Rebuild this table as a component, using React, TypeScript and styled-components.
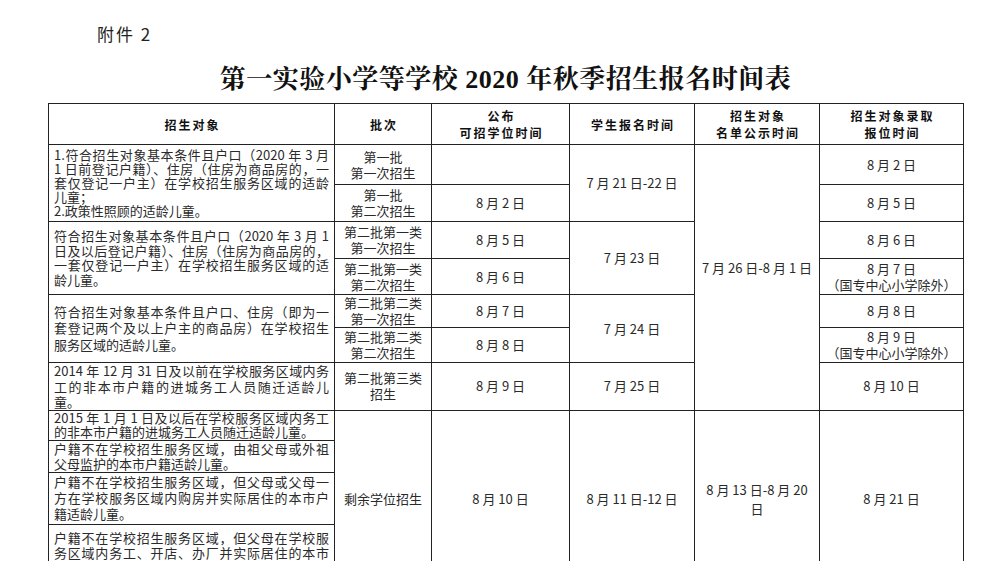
import React from "react";
import styled, { createGlobalStyle } from "styled-components";

const Global = createGlobalStyle`
  html, body {
    margin: 0;
    padding: 0;
    background: #ffffff;
    overflow: hidden;
  }
  body {
    font-family: "Noto Sans CJK SC", "Noto Sans", sans-serif;
    color: #222;
  }
`;

const Page = styled.div`
  width: 1000px;
  height: 561px;
  overflow: hidden;
  box-sizing: border-box;
  padding: 22px 0 0 48px;
`;

const Annex = styled.div`
  margin-left: 49px;
  font-size: 17px;
  line-height: 24px;
  letter-spacing: 2px;
  color: #222;
`;

const Title = styled.h1`
  width: 915px;
  margin: 17px 0 0;
  text-align: center;
  font-family: "Liberation Serif", "Noto Serif CJK SC", "Noto Sans CJK SC", serif;
  font-size: 26px;
  line-height: 34px;
  font-weight: 700;
  letter-spacing: 0.5px;
  color: #111;
`;

const Table = styled.table`
  margin-top: 6px;
  width: 915px;
  table-layout: fixed;
  border-collapse: collapse;
  font-size: 13px;
  color: #2a2a2a;
`;

const Row = styled.tr<{ $h: number }>`
  height: ${(p) => p.$h}px;
`;

const HeadCell = styled.th`
  border: 1px solid #222;
  padding: 0 0 0 2px;
  font-size: 12px;
  font-weight: 700;
  letter-spacing: 2px;
  line-height: 17px;
  text-align: center;
  vertical-align: middle;
  color: #111;
`;

const TargetCell = styled.td<{ $lh: number; $top?: boolean }>`
  border: 1px solid #222;
  padding: ${(p) => (p.$top ? "5px 5px 0" : "0 5px")};
  line-height: ${(p) => p.$lh}px;
  vertical-align: ${(p) => (p.$top ? "top" : "middle")};
`;

const Line = styled.span<{ $end?: boolean }>`
  display: block;
  white-space: nowrap;
  text-align: justify;
  text-align-last: ${(p) => (p.$end ? "left" : "justify")};
`;

const BatchCell = styled.td`
  border: 1px solid #222;
  padding: 0 2px;
  text-align: center;
  vertical-align: middle;
  line-height: 16px;
`;

const DateCell = styled.td<{ $lh?: number; $pb?: number }>`
  border: 1px solid #222;
  padding: 0 3px ${(p) => p.$pb ?? 0}px;
  text-align: center;
  vertical-align: middle;
  line-height: ${(p) => p.$lh ?? 16}px;
  white-space: nowrap;
`;

const isParagraphEnd = (text: string) => /[；。]$/.test(text);

const Para = ({ lines }: { lines: string[] }) => (
  <>
    {lines.map((l, i) => (
      <Line key={i} $end={i === lines.length - 1 || isParagraphEnd(l)}>
        {l}
      </Line>
    ))}
  </>
);

const colWidths = [286, 97, 138, 125, 125, 144];

export default function App() {
  return (
    <>
      <Global />
      <Page>
        <Annex>附件 2</Annex>
        <Title>第一实验小学等学校 2020 年秋季招生报名时间表</Title>
        <Table>
          <colgroup>
            {colWidths.map((w, i) => (
              <col key={i} style={{ width: w }} />
            ))}
          </colgroup>
          <tbody>
            <Row $h={41}>
              <HeadCell>招生对象</HeadCell>
              <HeadCell>批次</HeadCell>
              <HeadCell>
                公布
                <br />
                可招学位时间
              </HeadCell>
              <HeadCell>学生报名时间</HeadCell>
              <HeadCell>
                招生对象
                <br />
                名单公示时间
              </HeadCell>
              <HeadCell>
                招生对象录取
                <br />
                报位时间
              </HeadCell>
            </Row>

            <Row $h={40}>
              <TargetCell rowSpan={2} $lh={14}>
                <Para
                  lines={[
                    "1.符合招生对象基本条件且户口（2020 年 3 月",
                    "1 日前登记户籍）、住房（住房为商品房的，一",
                    "套仅登记一户主）在学校招生服务区域的适龄",
                    "儿童；",
                    "2.政策性照顾的适龄儿童。",
                  ]}
                />
              </TargetCell>
              <BatchCell>
                第一批
                <br />
                第一次招生
              </BatchCell>
              <DateCell />
              <DateCell rowSpan={2}>7 月 21 日-22 日</DateCell>
              <DateCell rowSpan={7} $pb={18}>
                7 月 26 日-8 月 1 日
              </DateCell>
              <DateCell>8 月 2 日</DateCell>
            </Row>
            <Row $h={37}>
              <BatchCell>
                第一批
                <br />
                第二次招生
              </BatchCell>
              <DateCell>8 月 2 日</DateCell>
              <DateCell>8 月 5 日</DateCell>
            </Row>

            <Row $h={37}>
              <TargetCell rowSpan={2} $lh={14.5}>
                <Para
                  lines={[
                    "符合招生对象基本条件且户口（2020 年 3 月 1",
                    "日及以后登记户籍）、住房（住房为商品房的，",
                    "一套仅登记一户主）在学校招生服务区域的适",
                    "龄儿童。",
                  ]}
                />
              </TargetCell>
              <BatchCell>
                第二批第一类
                <br />
                第一次招生
              </BatchCell>
              <DateCell>8 月 5 日</DateCell>
              <DateCell rowSpan={2}>7 月 23 日</DateCell>
              <DateCell>8 月 6 日</DateCell>
            </Row>
            <Row $h={36}>
              <BatchCell>
                第二批第一类
                <br />
                第二次招生
              </BatchCell>
              <DateCell>8 月 6 日</DateCell>
              <DateCell>
                8 月 7 日
                <br />
                （国专中心小学除外）
              </DateCell>
            </Row>

            <Row $h={33}>
              <TargetCell rowSpan={2} $lh={16.5}>
                <Para
                  lines={[
                    "符合招生对象基本条件且户口、住房（即为一",
                    "套登记两个及以上户主的商品房）在学校招生",
                    "服务区域的适龄儿童。",
                  ]}
                />
              </TargetCell>
              <BatchCell>
                第二批第二类
                <br />
                第一次招生
              </BatchCell>
              <DateCell>8 月 7 日</DateCell>
              <DateCell rowSpan={2}>7 月 24 日</DateCell>
              <DateCell>8 月 8 日</DateCell>
            </Row>
            <Row $h={35}>
              <BatchCell>
                第二批第二类
                <br />
                第二次招生
              </BatchCell>
              <DateCell>8 月 8 日</DateCell>
              <DateCell>
                8 月 9 日
                <br />
                （国专中心小学除外）
              </DateCell>
            </Row>

            <Row $h={47}>
              <TargetCell $lh={15.5}>
                <Para
                  lines={[
                    "2014 年 12 月 31 日及以前在学校服务区域内务",
                    "工的非本市户籍的进城务工人员随迁适龄儿",
                    "童。",
                  ]}
                />
              </TargetCell>
              <BatchCell>
                第二批第三类
                <br />
                招生
              </BatchCell>
              <DateCell>8 月 9 日</DateCell>
              <DateCell>7 月 25 日</DateCell>
              <DateCell>8 月 10 日</DateCell>
            </Row>

            <Row $h={30}>
              <TargetCell $lh={14.5}>
                <Para
                  lines={[
                    "2015 年 1 月 1 日及以后在学校服务区域内务工",
                    "的非本市户籍的进城务工人员随迁适龄儿童。",
                  ]}
                />
              </TargetCell>
              <BatchCell rowSpan={4}>剩余学位招生</BatchCell>
              <DateCell rowSpan={4}>8 月 10 日</DateCell>
              <DateCell rowSpan={4}>8 月 11 日-12 日</DateCell>
              <DateCell rowSpan={4} $lh={19}>
                8 月 13 日-8 月 20
                <br />日
              </DateCell>
              <DateCell rowSpan={4}>8 月 21 日</DateCell>
            </Row>
            <Row $h={31}>
              <TargetCell $lh={15.5}>
                <Para
                  lines={[
                    "户籍不在学校招生服务区域，由祖父母或外祖",
                    "父母监护的本市户籍适龄儿童。",
                  ]}
                />
              </TargetCell>
            </Row>
            <Row $h={52}>
              <TargetCell $lh={16}>
                <Para
                  lines={[
                    "户籍不在学校招生服务区域，但父母或父母一",
                    "方在学校服务区域内购房并实际居住的本市户",
                    "籍适龄儿童。",
                  ]}
                />
              </TargetCell>
            </Row>
            <Row $h={64}>
              <TargetCell $lh={15.5} $top>
                <Para
                  lines={[
                    "户籍不在学校招生服务区域，但父母在学校服",
                    "务区域内务工、开店、办厂并实际居住的本市",
                    "户籍适龄儿童。",
                  ]}
                />
              </TargetCell>
            </Row>
          </tbody>
        </Table>
      </Page>
    </>
  );
}
